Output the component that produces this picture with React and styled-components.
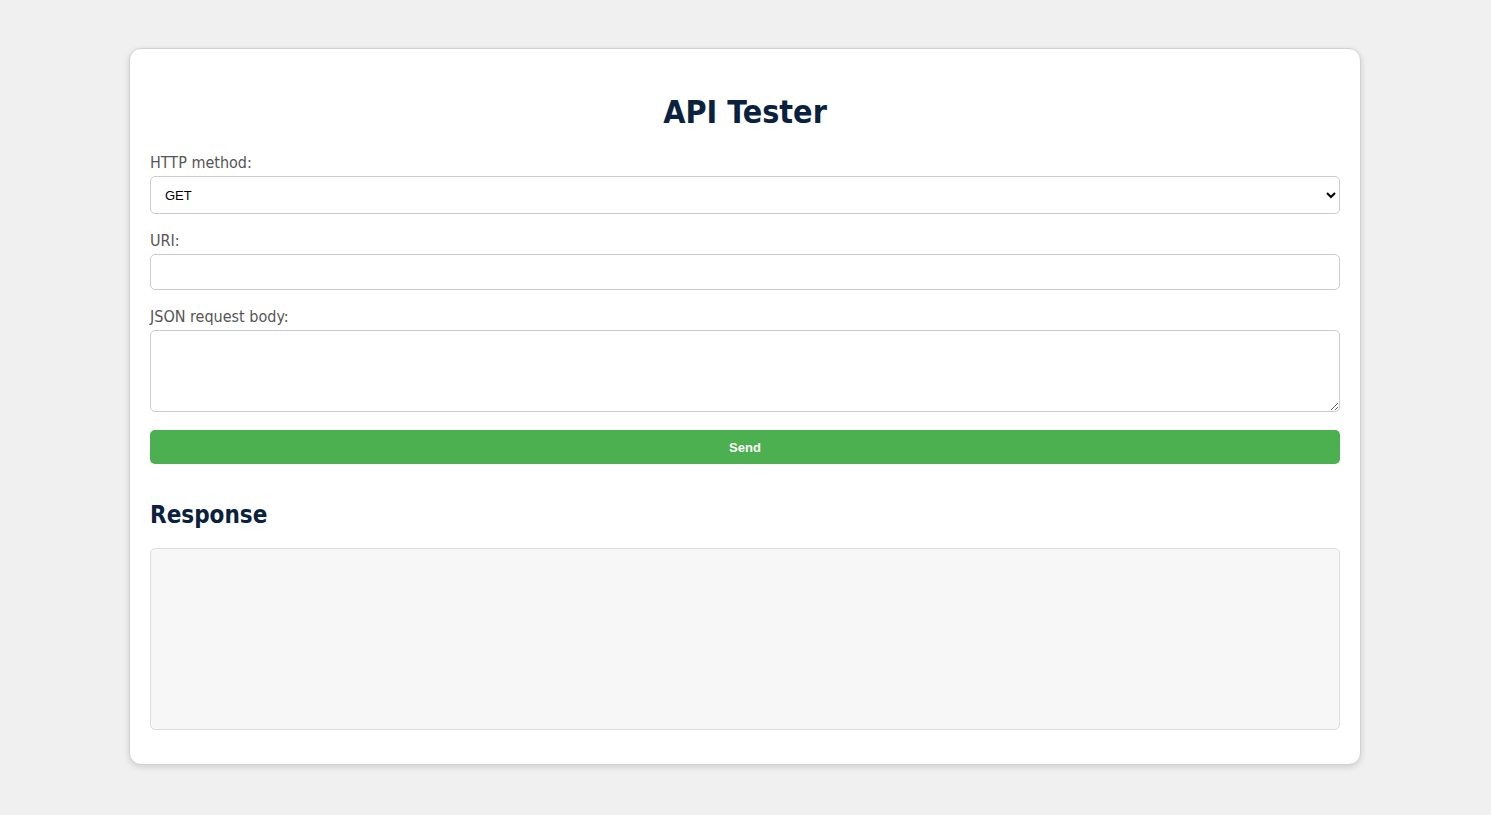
import React, { useState } from 'react';
import styled, { createGlobalStyle } from 'styled-components';

const GlobalStyle = createGlobalStyle`
  html, body {
    margin: 0;
    padding: 0;
    background: #f0f0f0;
    font-family: "DejaVu Sans Condensed", "DejaVu Sans", sans-serif;
    font-stretch: condensed;
  }
`;

const Page = styled.div`
  min-height: 815px;
  padding: 48px 1px 0 0;
  box-sizing: border-box;
`;

const Card = styled.div`
  width: 1232px;
  margin: 0 auto;
  box-sizing: border-box;
  padding: 20px;
  background: #fff;
  border: 1px solid #d2d2d2;
  border-radius: 12px;
  box-shadow: 0 2px 6px rgba(0, 0, 0, 0.14);
  display: flex;
  flex-direction: column;
`;

const Title = styled.h1`
  margin: 24px 0 22px;
  text-align: center;
  font-size: 32px;
  font-weight: bold;
  color: #0b223f;
`;

const Label = styled.label`
  display: block;
  font-size: 16px;
  line-height: 19px;
  color: #555;
  margin-bottom: 4px;
`;

const fieldBase = `
  display: block;
  width: 100%;
  box-sizing: border-box;
  border: 1px solid #ccc;
  border-radius: 5px;
  background: #fff;
  font-family: "Liberation Sans", Arial, sans-serif;
  font-size: 13px;
  color: #000;
  margin-bottom: 17px;
`;

const Select = styled.select`
  ${fieldBase}
  height: 38px;
  padding: 0 10px;
`;

const Input = styled.input`
  ${fieldBase}
  height: 36px;
  padding: 0 10px;
`;

const TextArea = styled.textarea`
  ${fieldBase}
  height: 82px;
  padding: 10px;
  margin-bottom: 18px;
`;

const SendButton = styled.button`
  height: 34px;
  width: 100%;
  border: none;
  border-radius: 5px;
  background: #4caf50;
  color: #fff;
  font-family: "Liberation Sans", Arial, sans-serif;
  font-size: 13px;
  font-weight: bold;
  cursor: pointer;
`;

const SubTitle = styled.h2`
  margin: 37px 0 19px;
  font-size: 24px;
  font-weight: bold;
  color: #0b223f;
`;

const ResponseBox = styled.pre`
  margin: 0 0 14px;
  height: 182px;
  box-sizing: border-box;
  padding: 10px;
  background: #f7f7f7;
  border: 1px solid #ddd;
  border-radius: 5px;
  font-family: "Liberation Mono", monospace;
  font-size: 13px;
`;

export default function App() {
  const [method, setMethod] = useState('GET');
  const [uri, setUri] = useState('');
  const [body, setBody] = useState('');
  const [response] = useState('');

  return (
    <>
      <GlobalStyle />
      <Page>
        <Card>
          <Title>API Tester</Title>
          <Label htmlFor="method">HTTP method:</Label>
          <Select id="method" value={method} onChange={(e) => setMethod(e.target.value)}>
            <option>GET</option>
            <option>POST</option>
            <option>PUT</option>
            <option>DELETE</option>
          </Select>
          <Label htmlFor="uri">URI:</Label>
          <Input id="uri" value={uri} onChange={(e) => setUri(e.target.value)} />
          <Label htmlFor="body">JSON request body:</Label>
          <TextArea id="body" value={body} onChange={(e) => setBody(e.target.value)} />
          <SendButton>Send</SendButton>
          <SubTitle>Response</SubTitle>
          <ResponseBox>{response}</ResponseBox>
        </Card>
      </Page>
    </>
  );
}
